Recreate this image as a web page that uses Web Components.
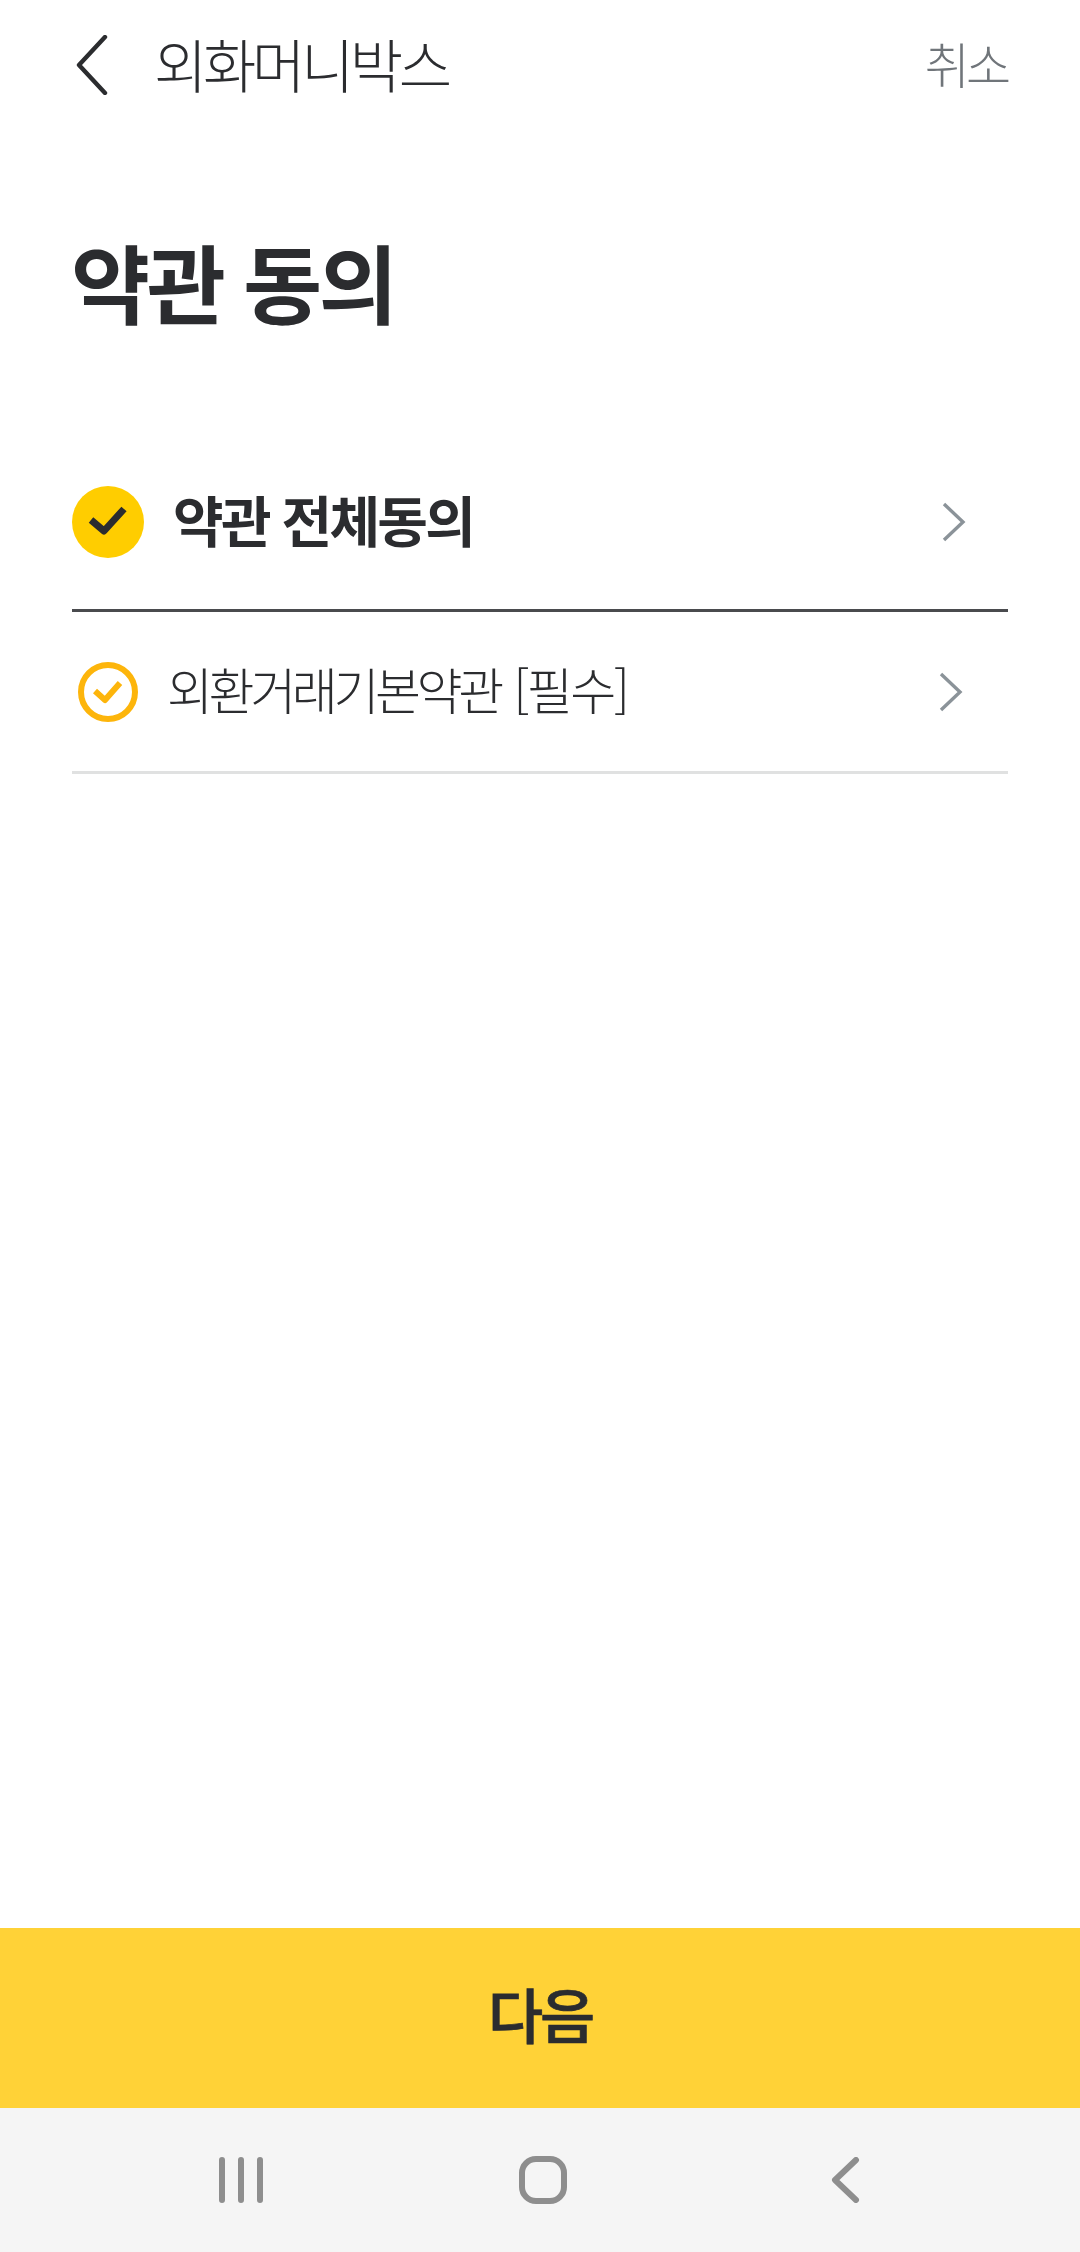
<!DOCTYPE html>
<html lang="ko">
<head>
<meta charset="utf-8">
<title>약관 동의</title>
<style>
    html, body { margin: 0; background: #fff; }
    body { font-family: "Noto Sans CJK KR", "Noto Sans", sans-serif; color: #2b2c2f; }
</style>
</head>
<body>
<terms-page>
    <app-bar slot="top" action="취소">외화머니박스</app-bar>
    <page-title>약관 동의</page-title>
    <term-row kind="all">약관 전체동의</term-row>
    <term-row kind="item">외환거래기본약관 <span style="letter-spacing: -2.4px">[필수]</span></term-row>
    <next-button slot="bottom">다음</next-button>
    <nav-bar slot="bottom"></nav-bar>
</terms-page>

<script>
class TermsPage extends HTMLElement {
    constructor() {
        super();
        this.attachShadow({mode: 'open'});
    }

    connectedCallback(){
        this.shadowRoot.innerHTML = `
        <style>
        :host { display: flex; flex-direction: column; height: 2252px; background: #fff; }
        .content { flex: 1; display: flex; flex-direction: column; }
        </style>
        <slot name="top"></slot>
        <div class="content"><slot></slot></div>
        <slot name="bottom"></slot>
        `;
    }
}

class AppBar extends HTMLElement {
    constructor() {
        super();
        this.attachShadow({mode: 'open'});
    }

    connectedCallback(){
        this.shadowRoot.innerHTML = `
        <style>
        :host { display: flex; align-items: center; height: 130px; padding: 0 73px 0 76px; }
        svg { display: block; width: 32px; height: 60px; margin-right: 46px; }
        .name { flex: 1; font-size: 58px; font-weight: 300; letter-spacing: -4.4px; line-height: 126px; height: 130px; }
        .action { font-size: 49px; font-weight: 300; letter-spacing: -4px; color: #70757a; line-height: 126px; height: 130px; }
        </style>
        <svg viewBox="0 0 32 60"><path d="M29 2 3 30l26 28" fill="none" stroke="#2b2c2f" stroke-width="4.4" stroke-linecap="round" stroke-linejoin="round"/></svg>
        <span class="name"><slot></slot></span>
        <span class="action">${this.getAttribute('action')}</span>
        `;
    }
}

class PageTitle extends HTMLElement {
    constructor() {
        super();
        this.attachShadow({mode: 'open'});
    }

    connectedCallback(){
        this.shadowRoot.innerHTML = `
        <style>
        :host { display: block; padding: 96px 72px 99px 71px; font-size: 86px; font-weight: 700; letter-spacing: -3.4px; line-height: 110px; color: #2b2c2f; }
        </style>
        <slot></slot>
        `;
    }
}

class TermRow extends HTMLElement {
    constructor() {
        super();
        this.attachShadow({mode: 'open'});
    }

    connectedCallback(){
        const all = this.getAttribute('kind') === 'all';
        this.shadowRoot.innerHTML = `
        <style>${this.getStyle()}</style>
        <div class="row ${all ? 'all' : 'item'}">
            ${all ? this.allIcon() : this.itemIcon()}
            <span class="label"><slot></slot></span>
            <svg class="arrow" viewBox="0 0 24 40"><path d="M2 2l19 18L2 38" fill="none" stroke="#8b9399" stroke-width="3.4"/></svg>
        </div>
        `;
    }

    allIcon(){
        return `<svg class="check" viewBox="0 0 72 72"><circle cx="36" cy="36" r="36" fill="#ffcd00"/><path d="M19 34l13 11 20-22" fill="none" stroke="#2b2c2f" stroke-width="7" stroke-linejoin="round"/></svg>`;
    }

    itemIcon(){
        return `<svg class="check" viewBox="0 0 60 60"><circle cx="30" cy="30" r="27" fill="none" stroke="#fdb50b" stroke-width="6"/><path d="M17 29l10 9 15-17" fill="none" stroke="#fdb50b" stroke-width="6" stroke-linejoin="round"/></svg>`;
    }

    getStyle(){
        return `
        :host { display: block; margin: 0 72px; }
        .row { display: flex; align-items: center; }
        .all { height: 174px; border-bottom: 3px solid #4a4b4e; padding: 0 42px 0 0; }
        .item { height: 159px; border-bottom: 3px solid #e0e1e1; padding: 0 45px 0 6px; }
        .all .check { width: 72px; height: 72px; margin-right: 29px; }
        .item .check { width: 60px; height: 60px; margin-right: 29px; }
        .label { flex: 1; line-height: 70px; }
        .all .label { font-size: 55px; font-weight: 700; letter-spacing: -2.7px; padding-bottom: 8px; }
        .item .label { font-size: 50px; font-weight: 300; letter-spacing: -4.4px; word-spacing: 4px; padding-bottom: 8px; }
        .arrow { display: block; width: 24px; height: 40px; }
        `;
    }
}

class NextButton extends HTMLElement {
    constructor() {
        super();
        this.attachShadow({mode: 'open'});
    }

    connectedCallback(){
        this.shadowRoot.innerHTML = `
        <style>
        :host { display: flex; align-items: center; justify-content: center; height: 168px; padding-bottom: 12px; background: #ffd237; color: #2b2c2f; font-size: 60px; font-weight: 500; letter-spacing: -3.2px; -webkit-text-stroke: 0.7px #2b2c2f; }
        </style>
        <slot></slot>
        `;
    }
}

class NavBar extends HTMLElement {
    constructor() {
        super();
        this.attachShadow({mode: 'open'});
    }

    connectedCallback(){
        this.shadowRoot.innerHTML = `
        <style>
        :host { display: block; height: 144px; background: #f5f5f5; }
        .bar { display: grid; grid-template-columns: repeat(3, 302px); height: 100%; align-items: center; justify-items: center; padding-left: 90px; }
        svg { display: block; }
        </style>
        <div class="bar">
            <svg width="44" height="46" viewBox="0 0 44 46"><path d="M3 3v40M22 3v40M41 3v40" stroke="#8e8e8e" stroke-width="6" stroke-linecap="round"/></svg>
            <svg width="50" height="50" viewBox="0 0 50 50"><rect x="4" y="4" width="42" height="42" rx="14" fill="none" stroke="#8e8e8e" stroke-width="6"/></svg>
            <svg width="30" height="46" viewBox="0 0 30 46"><path d="M26 3 5 23l21 20" fill="none" stroke="#8e8e8e" stroke-width="6" stroke-linecap="round" stroke-linejoin="round"/></svg>
        </div>
        `;
    }
}

customElements.define('terms-page', TermsPage);
customElements.define('app-bar', AppBar);
customElements.define('page-title', PageTitle);
customElements.define('term-row', TermRow);
customElements.define('next-button', NextButton);
customElements.define('nav-bar', NavBar);
</script>
</body>
</html>
